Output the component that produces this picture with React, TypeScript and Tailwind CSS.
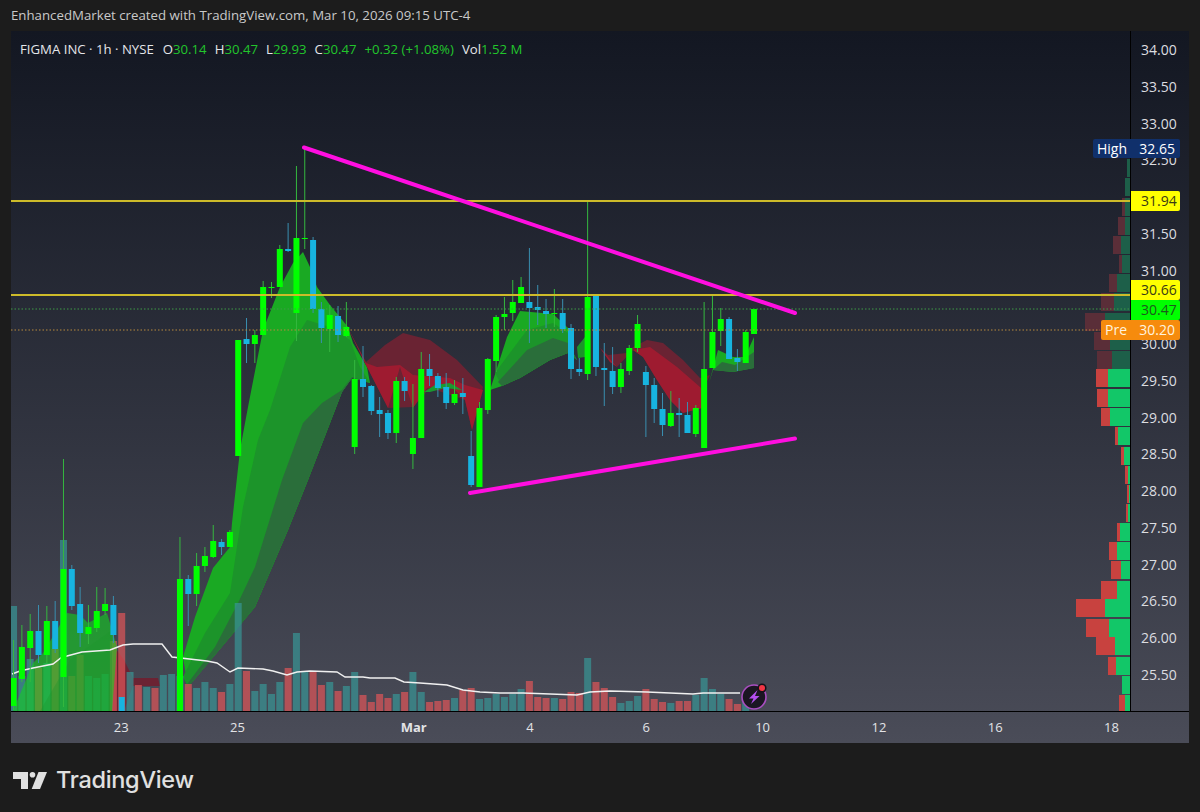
// Chart is drawn in page pixels: the svg's viewBox starts where the plot starts on the page.
const barX = (i: number) => 238.2 + 8.32 * i;

type Candle = [number, number, number, number, number, 'g' | 'c'];

// [index, body top, body bottom, wick top, wick bottom, colour]
const candles: Candle[] = [
  [-27, 678, 706, 640, 710, 'g'], [-26, 647, 679, 625, 682, 'g'], [-25, 631, 648, 614, 682, 'g'],
  [-24, 631, 655, 605, 663, 'c'], [-23, 621, 655, 606, 663, 'g'], [-22, 621, 649, 601, 653, 'c'],
  [-21, 569, 677, 459, 707, 'g'], [-20, 569, 606, 565, 610, 'c'], [-19, 604, 633, 587, 647, 'c'],
  [-18, 627, 634, 605, 644, 'g'], [-17, 611, 628, 587, 632, 'g'], [-16, 604, 611, 588, 615, 'g'],
  [-15, 605, 635, 596, 643, 'c'], [-14, 697, 711, 697, 711, 'c'],
  [-7, 579, 711, 537, 711, 'g'], [-6, 579, 594, 575, 626, 'c'], [-5, 566, 594, 553, 606, 'g'],
  [-4, 556, 566, 547, 572, 'g'], [-3, 541, 557, 525, 558, 'g'], [-2, 542, 547, 539, 555, 'c'],
  [-1, 532, 547, 530, 547, 'g'],
  [0, 340, 456, 340, 456, 'g'], [1, 339, 344, 318, 363, 'c'], [2, 335, 344, 330, 363, 'g'],
  [3, 287, 335, 281, 335, 'g'], [4, 287, 288, 282, 298, 'g'], [5, 249, 287, 245, 287, 'g'],
  [6, 249, 251, 223, 252, 'c'], [7, 238, 313, 166, 341, 'g'], [8, 238, 239, 147, 249, 'g'],
  [9, 240, 309, 237, 313, 'c'], [10, 309, 328, 302, 343, 'c'], [11, 315, 329, 305, 352, 'g'],
  [12, 316, 335, 306, 342, 'c'], [13, 327, 336, 302, 337, 'g'], [14, 379, 447, 360, 454, 'g'],
  [15, 379, 387, 346, 397, 'c'], [16, 386, 411, 385, 415, 'c'], [17, 410, 414, 397, 437, 'c'],
  [18, 413, 433, 410, 439, 'c'], [19, 381, 433, 377, 443, 'g'], [20, 381, 391, 377, 401, 'c'],
  [21, 438, 454, 384, 469, 'g'], [22, 369, 438, 352, 438, 'g'], [23, 369, 376, 354, 386, 'c'],
  [24, 376, 388, 373, 397, 'c'], [25, 387, 403, 373, 409, 'c'], [26, 394, 403, 380, 405, 'g'],
  [27, 393, 397, 378, 414, 'c'], [28, 456, 485, 431, 487, 'c'], [29, 408, 487, 402, 487, 'g'],
  [30, 359, 410, 358, 414, 'g'], [31, 317, 361, 315, 372, 'g'],
  [32, 314, 317, 297, 330, 'g'], [33, 302, 313, 280, 321, 'g'], [34, 287, 303, 277, 303, 'g'],
  [35, 302, 308, 248, 343, 'c'], [36, 307, 310, 285, 325, 'c'], [37, 311, 314, 299, 328, 'c'],
  [38, 313, 314, 289, 327, 'g'], [39, 313, 329, 299, 333, 'c'], [40, 328, 369, 324, 379, 'c'],
  [41, 369, 372, 358, 376, 'c'], [42, 297, 374, 201, 380, 'g'], [43, 296, 367, 296, 376, 'c'],
  [44, 368, 370, 343, 406, 'c'], [45, 371, 387, 347, 394, 'c'], [46, 369, 387, 363, 393, 'g'],
  [47, 348, 371, 345, 375, 'g'], [48, 324, 348, 315, 352, 'g'], [49, 372, 385, 366, 437, 'c'],
  [50, 385, 409, 378, 423, 'c'], [51, 409, 425, 393, 436, 'c'], [52, 413, 426, 391, 427, 'g'],
  [53, 413, 415, 398, 437, 'c'], [54, 415, 433, 402, 433, 'c'], [55, 408, 434, 405, 437, 'g'],
  [56, 369, 448, 302, 448, 'g'], [57, 332, 368, 296, 368, 'g'], [58, 319, 331, 308, 346, 'g'],
  [59, 319, 359, 317, 359, 'c'], [60, 358, 362, 349, 371, 'c'], [61, 332, 363, 330, 363, 'g'],
  [62, 309, 334, 309, 334, 'g'],
];

// [index, bar height, colour]
const volume: [number, number, 't' | 'r'][] = [
  [-27, 105, 't'], [-26, 35, 't'], [-25, 52, 't'], [-24, 43, 'r'], [-23, 48, 't'], [-22, 62, 'r'],
  [-21, 171, 't'], [-20, 35, 'r'], [-19, 56, 'r'], [-18, 35, 't'], [-17, 33, 't'], [-16, 37, 't'],
  [-15, 70, 'r'], [-14, 98, 'r'], [-13, 39, 't'], [-12, 26, 'r'], [-11, 24, 't'], [-10, 23, 'r'],
  [-9, 36, 't'], [-8, 37, 't'], [-7, 35, 't'], [-6, 27, 'r'], [-5, 23, 't'], [-4, 29, 't'],
  [-3, 23, 't'], [-2, 19, 'r'], [-1, 27, 't'], [0, 108, 't'], [1, 40, 'r'], [2, 20, 't'],
  [3, 27, 't'], [4, 17, 't'], [5, 29, 't'], [6, 43, 'r'], [7, 78, 't'], [8, 40, 't'],
  [9, 39, 'r'], [10, 26, 'r'], [11, 29, 't'], [12, 20, 'r'], [13, 25, 't'], [14, 39, 't'],
  [15, 16, 'r'], [16, 9, 'r'], [17, 17, 'r'], [18, 13, 'r'], [19, 17, 't'], [20, 19, 'r'],
  [21, 39, 't'], [22, 19, 't'], [23, 9, 'r'], [24, 10, 'r'], [25, 11, 'r'], [26, 13, 't'],
  [27, 21, 'r'], [28, 23, 'r'], [29, 12, 't'], [30, 13, 't'], [31, 17, 't'], [32, 14, 't'],
  [33, 17, 't'], [34, 22, 't'], [35, 30, 'r'], [36, 14, 'r'], [37, 13, 'r'], [38, 13, 't'],
  [39, 12, 'r'], [40, 19, 'r'], [41, 18, 'r'], [42, 53, 't'], [43, 29, 'r'], [44, 23, 'r'],
  [45, 14, 'r'], [46, 8, 't'], [47, 10, 't'], [48, 15, 't'], [49, 22, 'r'], [50, 12, 'r'],
  [51, 9, 'r'], [52, 8, 't'], [53, 10, 'r'], [54, 10, 'r'], [55, 16, 't'], [56, 33, 't'],
  [57, 22, 't'], [58, 17, 't'], [59, 12, 'r'], [60, 7, 'r'], [61, 11, 't'],
];

// volume profile rows, [top, red left edge, green left edge]
const profileDim: [number, number, number][] = [
  [159, 1127, 1127], [178, 1125, 1125], [198, 1122, 1125], [217, 1118, 1125], [236, 1113, 1121],
  [255, 1119, 1122], [274, 1109, 1117], [293, 1101, 1114], [313, 1085, 1105], [332, 1094, 1110],
  [351, 1097, 1112],
];
const profileBright: [number, number, number][] = [
  [369, 1096, 1108], [389, 1097, 1108], [408, 1101, 1110], [427, 1115, 1118], [447, 1121, 1124],
  [466, 1125, 1128], [485, 1127, 1129], [504, 1126, 1128], [523, 1117, 1120], [542, 1109, 1117],
  [561, 1111, 1121], [581, 1101, 1117], [599, 1076, 1105], [619, 1086, 1109], [637, 1096, 1115],
  [657, 1108, 1116], [676, 1122, 1122], [695, 1119, 1125],
];

const maLine =
  '12,674 20,671 33,668 53,664 62,657 67,656 82,652 110,650 123,645 133,644 162,644 172,657 207,661 217,663 230,672 238,668 263,669 273,671 287,675 297,672 310,671 337,672 345,677 363,677 370,678 395,678 404,682 420,683 447,685 463,690 480,692 500,693 523,693 577,695 590,692 610,691 647,692 693,694 703,693 740,693';

const bigLower = '370,383 352,378 342,392 308,480 288,530 255,607 225,643 188,687';

function Chart() {
  return (
    <svg viewBox="11 31 1119 680" className="block h-[680px] w-[1119px]">
      {/* big green ribbon */}
      <polygon
        points={`183,657 195,617 213,568 230,547 232,523 240,450 248,407 263,330 280,287 293,263 303,252 310,267 317,287 330,305 348,327 353,343 367,367 ${bigLower}`}
        fill="#1aa923"
      />
      <polygon
        points={`183,677 205,633 230,593 243,507 258,440 270,410 290,347 307,320 330,327 350,340 360,367 ${bigLower}`}
        fill="#1c942a"
      />
      <polygon points={`185,687 215,647 238,603 255,567 282,480 303,423 322,403 342,390 352,377 ${bigLower}`} fill="#2a6e3a" />

      {/* red ribbons */}
      <polygon points="348,328 366,362 385,345 403,333 430,340 457,360 483,387 472,430 465,400 430,388 413,407 388,408 366,365" fill="#6a2333" />
      <polygon points="348,328 366,363 377,367 400,365 413,375 450,378 465,385 483,390 472,430 465,400 450,385 427,388 413,408 400,367 388,408 366,365" fill="#9e1b30" />
      <polygon points="424,392 435,385 450,383 462,390 445,388 430,392" fill="#1a9a30" />
      <polygon points="600,348 608,355 627,353 633,347 647,340 663,343 683,360 700,378 710,375 703,390 702,408 683,413 670,400 657,380 643,357 633,350 617,367 610,362" fill="#6a2333" />
      <polygon points="600,348 617,367 633,350 650,347 677,367 700,387 703,390 702,408 683,413 670,400 657,380 643,357 633,350 617,367 610,362" fill="#9e1b30" />
      <polygon points="113,645 124,660 133,678 158,678 160,686 133,686 124,711 113,711" fill="#6b2333" />

      {/* green ribbons on the right */}
      <polygon points="490,390 507,337 520,311 553,314 568,328 570,347 577,360 568,353 550,360 520,378 502,386" fill="#1aa923" />
      <polygon points="495,373 527,330 553,323 568,333 570,347 577,360 568,353 550,360 520,378 502,386" fill="#1c942a" />
      <polygon points="498,382 527,350 553,338 568,343 577,360 568,353 550,360 520,378 502,386" fill="#2a6e3a" />
      <polygon points="577,347 585,337 585,357 578,358" fill="#1c942a" />
      <polygon points="709,383 718,350 733,357 745,357 754,337 754,368 733,372 713,370" fill="#1aa923" />
      <polygon points="713,370 722,362 735,365 754,352 754,368 733,372" fill="#2a6e3a" />

      {/* volume */}
      {volume.map(([i, h, c]) => (
        <rect
          key={i}
          x={barX(i) - 3.5}
          y={711 - h}
          width={7}
          height={h}
          fill={c === 't' ? '#379695' : '#e05658'}
          opacity={0.7}
        />
      ))}

      {/* first ribbon, far left: the bars show through it */}
      <polygon points="13,711 33,663 43,653 67,613 80,615 88,623 107,613 112,630 117,647 112,711" fill="#10d020" opacity={0.6} />
      <polygon points="40,711 70,660 112,630 112,711" fill="#1c942a" opacity={0.35} />

      {/* moving average */}
      <polyline points={maLine} fill="none" stroke="#f0f0f0" strokeWidth={1.4} />

      {/* candles */}
      {candles.map(([i, top, bottom, wickTop, wickBottom, c]) => (
        <g key={i}>
          <line
            x1={barX(i)}
            x2={barX(i)}
            y1={wickTop}
            y2={wickBottom}
            stroke={c === 'g' ? '#35b83f' : '#3a8fb0'}
            strokeWidth={1}
          />
          <rect
            x={barX(i) - 3}
            y={top}
            width={6}
            height={bottom - top}
            fill={c === 'g' ? '#00ff00' : '#17b4e0'}
          />
        </g>
      ))}

      {/* volume profile */}
      {profileDim.map(([y, red, green]) => (
        <g key={y}>
          <rect x={red} y={y} width={green - red} height={18} fill="#5a2e38" />
          <rect x={green} y={y} width={1130 - green} height={18} fill="#1d5f49" />
        </g>
      ))}
      {profileBright.map(([y, red, green]) => (
        <g key={y}>
          <rect x={red} y={y} width={green - red} height={18} fill="#c8423f" />
          <rect x={green} y={y} width={1130 - green} height={18} fill="#12c768" />
        </g>
      ))}

      {/* price lines */}
      <line x1={11} x2={1130} y1={309} y2={309} stroke="#3f9a46" strokeDasharray="1.5 2" />
      <line x1={11} x2={1100} y1={330} y2={330} stroke="#b8893c" strokeDasharray="1.5 2" />
      <line x1={11} x2={1130} y1={201} y2={201} stroke="#cdbb2a" strokeWidth={2} />
      <line x1={11} x2={1130} y1={295} y2={295} stroke="#cdbb2a" strokeWidth={2} />

      {/* trend lines */}
      <line x1={304} x2={795} y1={147.5} y2={313} stroke="#ff0ee0" strokeWidth={4} strokeLinecap="round" />
      <line x1={470} x2={795} y1={493} y2={438.5} stroke="#ff0ee0" strokeWidth={4} strokeLinecap="round" />

      {/* flash badge */}
      <circle cx={754} cy={697} r={12} fill="#1b1622" stroke="#a94ec0" strokeWidth={1.6} />
      <path d="M757.5 690 749 698.5h4.5L751 704l8.5-8h-4.5z" fill="#b44ff0" />
      <circle cx={762} cy={688} r={4.6} fill="#15121a" />
      <circle cx={762} cy={688} r={3} fill="#f23645" />
    </svg>
  );
}

// 32.00 and 30.50 are covered by the tags, they only hold their slot here
const prices = [
  '34.00', '33.50', '33.00', '32.50', '32.00', '31.50', '31.00', '30.50', '30.00',
  '29.50', '29.00', '28.50', '28.00', '27.50', '27.00', '26.50', '26.00', '25.50',
];
const hiddenPrices = ['32.00', '30.50'];

function PriceAxis() {
  return (
    <div className="relative flex w-[59px] flex-col justify-between border-l border-black pt-[10px] pb-[27px] pl-[10px] text-[14px] leading-[18px] font-medium text-[#dcdde0]">
      {prices.map((p) => (
        <span key={p} className={hiddenPrices.includes(p) ? 'invisible' : ''}>
          {p}
        </span>
      ))}

      <div className="absolute top-[108px] right-[9px] flex h-[19px] w-[87px] items-center justify-between rounded-[2px] bg-[#10306b] pr-[5px] pl-[4px] text-white">
        <span>High</span>
        <span>32.65</span>
      </div>
      <div className="absolute top-[160px] left-0 flex h-[20px] w-[49px] items-center rounded-r-[2px] bg-[#ffff00] pl-[10px] text-[#3a3a14]">31.94</div>
      <div className="absolute top-[249px] left-0 flex h-[20px] w-[49px] items-center rounded-r-[2px] bg-[#ffff00] pl-[10px] text-[#3a3a14]">30.66</div>
      <div className="absolute top-[269px] left-0 flex h-[20px] w-[49px] items-center rounded-r-[2px] bg-[#00ff00] pl-[10px] text-[#1c5a1c]">30.47</div>
      <div className="absolute top-[289px] left-[-30px] flex h-[20px] w-[79px] items-center justify-between rounded-[2px] bg-[#f68b0d] pr-[5px] pl-[4px] text-[#fff3df]">
        <span>Pre</span>
        <span>30.20</span>
      </div>
    </div>
  );
}

function Legend() {
  const val = 'text-[#22c52c]';
  return (
    <div className="absolute top-[9px] left-[9px] flex gap-[8px] text-[13.2px] leading-[18px] font-medium text-[#e4e6ea]">
      <span className="mr-[1px]">FIGMA INC · 1h · NYSE</span>
      <span>O<span className={val}>30.14</span></span>
      <span>H<span className={val}>30.47</span></span>
      <span>L<span className={val}>29.93</span></span>
      <span>C<span className={val}>30.47</span></span>
      <span className={val}>+0.32 (+1.08%)</span>
      <span>Vol<span className={val}>1.52 M</span></span>
    </div>
  );
}

function TimeAxis() {
  const cell = 'w-[116.3px] text-center';
  return (
    <div className="flex h-[32px] items-center border-t border-black pl-[52px] text-[13px] font-medium text-[#e2e3e6]">
      <span className={cell}>23</span>
      <span className={cell}>25</span>
      <span className="w-[60px]" />
      <span className={cell + ' font-bold'}>Mar</span>
      <span className={cell}>4</span>
      <span className={cell}>6</span>
      <span className={cell}>10</span>
      <span className={cell}>12</span>
      <span className={cell}>16</span>
      <span className={cell}>18</span>
    </div>
  );
}

export default function App() {
  return (
    <div className="flex h-[812px] w-[1200px] flex-col overflow-hidden bg-[#1c1c1c] font-['Open_Sans',sans-serif]">
      <div className="flex h-[31px] items-center pl-[11px] text-[13.25px] text-[#c9c9c9]">
        EnhancedMarket created with TradingView.com, Mar 10, 2026 09:15 UTC-4
      </div>

      <div className="ml-[11px] h-[712px] w-[1178px] bg-gradient-to-b from-[#131722] to-[#4a4c58]">
        <div className="flex h-[680px]">
          <div className="relative">
            <Chart />
            <Legend />
          </div>
          <PriceAxis />
        </div>
        <TimeAxis />
      </div>

      <div className="flex items-center gap-[9px] pt-[25px] pl-[13px] text-[#e0e0e0]">
        <svg viewBox="0 0 34 17" className="h-[17px] w-[34px]" fill="currentColor">
          <path d="M0 0h15v17H8V7H0z" />
          <circle cx={19.5} cy={2.8} r={2.8} />
          <path d="M25.5 0H34L27 17h-8.3z" />
        </svg>
        <span className="font-['Inter',sans-serif] text-[23.5px] leading-[24px] font-medium tracking-[-0.3px]">TradingView</span>
      </div>
    </div>
  );
}
